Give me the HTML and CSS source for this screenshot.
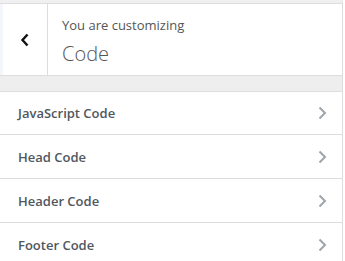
FILE: index.html
```html
<!DOCTYPE html>
<html>
<head>
<meta charset="utf-8">
<link rel="stylesheet" href="styles.css">
</head>
<body>
<div class="panel">
  <div class="header">
    <button class="back" aria-label="Back">
      <svg width="10" height="14" viewBox="0 0 10 14"><path d="M7.5 1.5 L2.5 7 L7.5 12.5" fill="none" stroke="#111" stroke-width="2.4"/></svg>
    </button>
    <div class="title">
      <span class="sub">You are customizing</span>
      <span class="name">Code</span>
    </div>
  </div>
  <div class="band"></div>
  <ul class="list">
    <li class="row"><span>JavaScript Code</span><svg class="chev" width="9" height="14" viewBox="0 0 9 14"><path d="M1.5 1.5 L7 7 L1.5 12.5" fill="none" stroke="#a0a5aa" stroke-width="2"/></svg></li>
    <li class="row"><span>Head Code</span><svg class="chev" width="9" height="14" viewBox="0 0 9 14"><path d="M1.5 1.5 L7 7 L1.5 12.5" fill="none" stroke="#a0a5aa" stroke-width="2"/></svg></li>
    <li class="row"><span>Header Code</span><svg class="chev" width="9" height="14" viewBox="0 0 9 14"><path d="M1.5 1.5 L7 7 L1.5 12.5" fill="none" stroke="#a0a5aa" stroke-width="2"/></svg></li>
    <li class="row"><span>Footer Code</span><svg class="chev" width="9" height="14" viewBox="0 0 9 14"><path d="M1.5 1.5 L7 7 L1.5 12.5" fill="none" stroke="#a0a5aa" stroke-width="2"/></svg></li>
  </ul>
</div>
</body>
</html>
```
FILE: styles.css
```css
html, body {
  margin: 0;
  padding: 0;
  background: #fff;
  font-family: "Open Sans", "Segoe UI", sans-serif;
}
.panel {
  width: 342px;
  border-right: 1px solid #ddd;
  border-top: 3px solid #f0f0f0;
  min-height: 258px;
  box-sizing: content-box;
}
.header {
  display: flex;
  height: 71px;
  border-top: 1px solid #ddd;
  border-bottom: 1px solid #ddd;
  background: #fff;
}
.back {
  width: 48px;
  border: none;
  border-left: 3px solid #f3f7fb;
  border-right: 1px solid #ddd;
  background: #fff;
  display: flex;
  align-items: center;
  justify-content: center;
  padding: 0;
  margin: 0;
}
.title {
  display: flex;
  flex-direction: column;
  padding: 12px 0 0 14px;
  color: #555;
}
.sub {
  font-size: 13px;
  line-height: 18px;
}
.name {
  font-size: 20px;
  font-weight: 300;
  line-height: 28px;
  margin-top: 6px;
}
.band {
  height: 15px;
  background: #eee;
  border-bottom: 1px solid #ddd;
}
.list {
  list-style: none;
  margin: 0;
  padding: 0;
}
.row {
  display: flex;
  align-items: center;
  justify-content: space-between;
  height: 43px;
  padding: 0 15px 0 18px;
  border-bottom: 1px solid #ddd;
  font-size: 13px;
  font-weight: 600;
  color: #50575e;
}
.row:first-child {
  height: 42px;
}
.row:last-child {
  border-bottom: none;
}
```
